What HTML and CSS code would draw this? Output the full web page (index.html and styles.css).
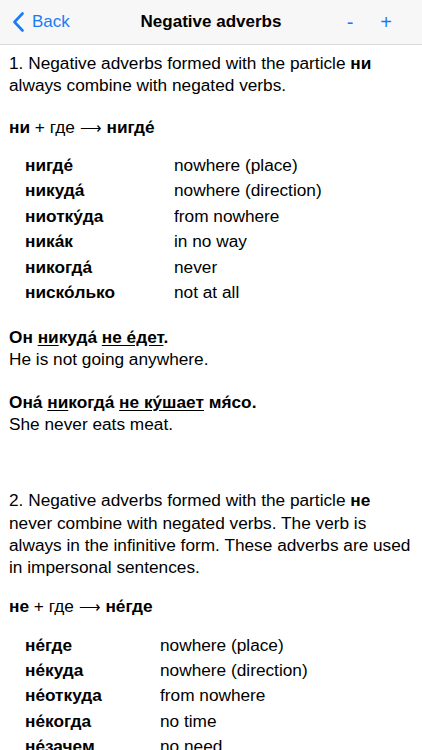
FILE: index.html
```html
<!DOCTYPE html>
<html>
<head>
<meta charset="utf-8">
<link rel="stylesheet" href="styles.css">
</head>
<body>
<header class="nav">
  <div class="back">
    <svg class="chev" width="13" height="20" viewBox="0 0 13 20"><path d="M10.5 1.5 L2.5 10 L10.5 18.5" fill="none" stroke="#1a7cf5" stroke-width="2.6" stroke-linecap="round" stroke-linejoin="round"/></svg>
    <span>Back</span>
  </div>
  <div class="title">Negative adverbs</div>
  <div class="actions"><span class="minus">-</span><span class="plus">+</span></div>
</header>
<main class="content">
  <p class="p1">1. Negative adverbs formed with the particle <b>ни</b> always combine with negated verbs.</p>
  <p class="formula"><b>ни</b> + где <span class="arrow">⟶</span> <b>нигде́</b></p>
  <div class="table t1">
    <b>нигде́</b><span>nowhere (place)</span>
    <b>никуда́</b><span>nowhere (direction)</span>
    <b>ниотку́да</b><span>from nowhere</span>
    <b>ника́к</b><span>in no way</span>
    <b>никогда́</b><span>never</span>
    <b>ниско́лько</b><span>not at all</span>
  </div>
  <p class="ex"><b>Он <u>ни</u>куда́ <u>не е́дет</u>.</b><br>He is not going anywhere.</p>
  <p class="ex"><b>Она́ <u>ни</u>когда́ <u>не ку́шает</u> мя́со.</b><br>She never eats meat.</p>
  <p class="p2">2. Negative adverbs formed with the particle <b>не</b> never combine with negated verbs. The verb is always in the infinitive form. These adverbs are used in impersonal sentences.</p>
  <p class="formula f2"><b>не</b> + где <span class="arrow">⟶</span> <b>не́где</b></p>
  <div class="table t2">
    <b>не́где</b><span>nowhere (place)</span>
    <b>не́куда</b><span>nowhere (direction)</span>
    <b>не́откуда</b><span>from nowhere</span>
    <b>не́когда</b><span>no time</span>
    <b>не́зачем</b><span>no need</span>
  </div>
</main>
</body>
</html>
```
FILE: styles.css
```css
html, body {
  margin: 0;
  padding: 0;
  background: #ffffff;
  overflow: hidden;
}
body {
  font-family: "Liberation Sans", Arial, sans-serif;
  color: #000;
  width: 422px;
  height: 750px;
}
.nav {
  height: 44px;
  background: #f7f7f7;
  border-bottom: 1px solid #d9d9d9;
  display: flex;
  align-items: center;
  position: relative;
}
.back {
  display: flex;
  align-items: center;
  color: #1a7cf5;
  font-size: 17px;
  padding-left: 12px;
  gap: 7px;
}
.chev { display: block; }
.title {
  position: absolute;
  left: 0;
  right: 0;
  text-align: center;
  font-weight: bold;
  font-size: 17px;
  pointer-events: none;
}
.actions {
  margin-left: auto;
  display: flex;
  color: #1a7cf5;
  font-size: 20px;
  padding-right: 30px;
  gap: 27px;
}
.content {
  padding: 7px 10px 0 9px;
  font-size: 17.25px;
  line-height: 22px;
}
p { margin: 0; }
.formula { margin-top: 20px; }
.arrow {
  font-family: "DejaVu Sans", sans-serif;
  font-size: 15px;
  font-weight: 200;
}
.table {
  display: grid;
  padding-left: 16px;
  line-height: 25.4px;
  margin-top: 14px;
}
.t1 { grid-template-columns: 149px 1fr; }
.t2 { grid-template-columns: 135px 1fr; margin-top: 15px; }
.ex { margin-top: 21px; }
.p2 { margin-top: 54px; line-height: 22.3px; }
.f2 { margin-top: 16px; }
u { text-underline-offset: 2px; }
```
